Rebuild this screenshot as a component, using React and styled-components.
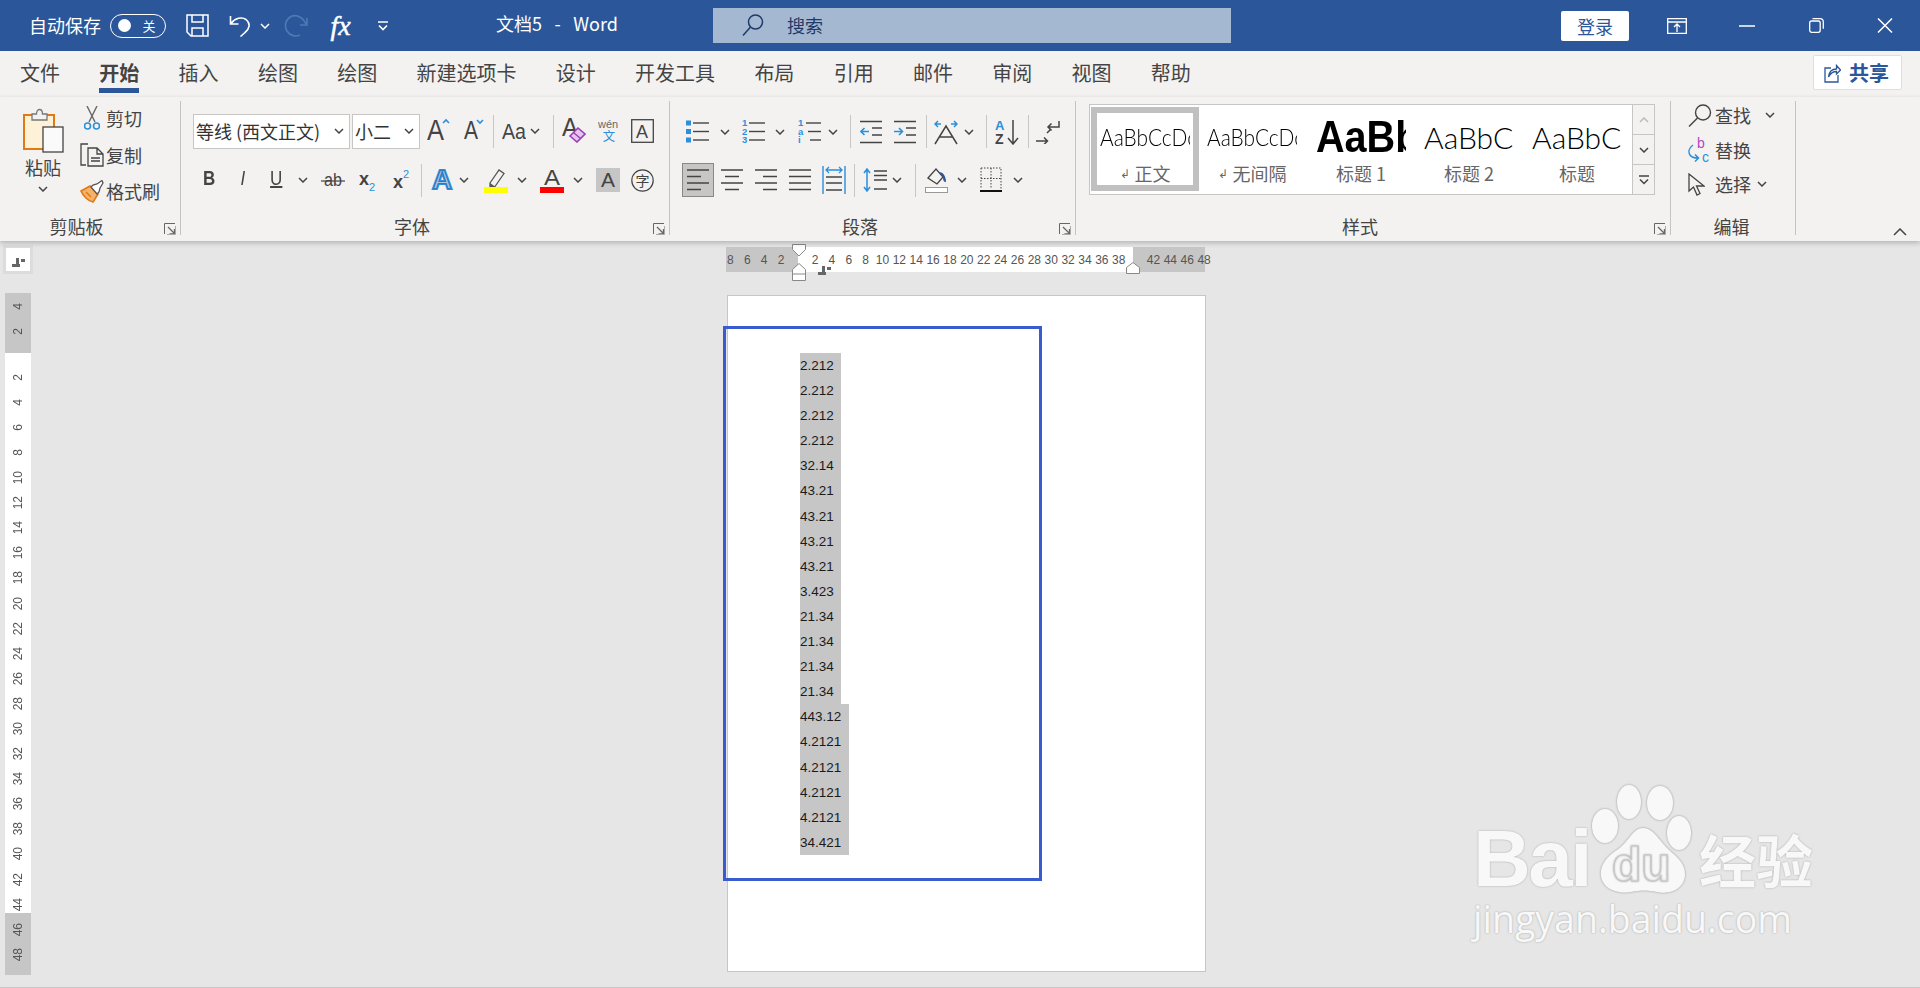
import React from 'react';
import styled, { createGlobalStyle } from 'styled-components';

const UI_FONT = '"Noto Sans CJK SC", "Noto Sans", sans-serif';
const LATIN = '"Liberation Sans", Arial, sans-serif';
const BLUE = '#2b579a';
const INK = '#444';
const SKY = '#2b8fd9';

const GlobalStyle = createGlobalStyle`
    html, body {
        margin: 0;
        height: 100%;
        overflow: hidden;
        background: #e6e6e6;
    }
    body {
        font-family: ${UI_FONT};
        color: ${INK};
    }
`;

const App_ = styled.div`
    position: relative;
    width: 1920px;
    height: 988px;
    overflow: hidden;
    background: #e6e6e6;
    display: flex;
    flex-direction: column;
`;

/* title bar */
const TitleBar = styled.header`
    flex: none;
    height: 51px;
    background: ${BLUE};
    display: flex;
    align-items: center;
    color: #fff;
`;
const TitleItem = styled.div`
    flex: none;
    margin-left: ${(p) => p.$ml || 0}px;
    margin-top: ${(p) => p.$mt || 0}px;
    display: flex;
    align-items: center;
    justify-content: center;
`;
const AutoSave = styled(TitleItem)`
    font-size: 18px;
    line-height: 24px;
    width: 72px;
    margin-top: -2px;
`;
const Toggle = styled(TitleItem)`
    position: relative;
    width: 56px;
    height: 24px;
    box-sizing: border-box;
    border: 1.5px solid #fff;
    border-radius: 12px;
    font-size: 13px;
    padding-left: 22px;
    &::before {
        content: '';
        position: absolute;
        left: 7px;
        top: 4px;
        width: 13px;
        height: 13px;
        border-radius: 50%;
        background: #fff;
    }
`;
const Fx = styled(TitleItem)`
    width: 21px;
    font: italic 400 28px "Liberation Serif", serif;
    line-height: 27px;
    -webkit-text-stroke: 0.5px #fff;
`;
const DocTitle = styled(TitleItem)`
    width: 122px;
    font-size: 18px;
    white-space: pre;
    word-spacing: 2.2px;
    margin-top: -5px;
`;
const SearchBox = styled(TitleItem)`
    width: 518px;
    height: 35px;
    margin-top: -1px;
    justify-content: flex-start;
    background: #a5b8d2;
    color: #1e3a68;
    font-size: 18px;
    padding-left: 29px;
    box-sizing: border-box;
    gap: 23px;
`;
const SignIn = styled(TitleItem)`
    width: 68px;
    height: 30px;
    background: #fff;
    border-radius: 2px;
    color: ${BLUE};
    font-size: 18px;
`;

/* tabs */
const TabRow = styled.nav`
    flex: none;
    height: 46px;
    background: #f3f2f1;
    display: flex;
    align-items: flex-start;
    padding-left: 20px;
    gap: 39.3px;
`;
const Tab = styled.div`
    height: 42px;
    box-sizing: border-box;
    padding-top: 7px;
    font-size: 20px;
    line-height: 30px;
    white-space: nowrap;
    font-weight: ${(p) => (p.$active ? 700 : 400)};
    border-bottom: 5px solid ${(p) => (p.$active ? BLUE : 'transparent')};
`;
const ShareButton = styled.div`
    margin: 4px 18px 0 auto;
    width: 89px;
    height: 35px;
    box-sizing: border-box;
    background: #fff;
    border: 1px solid #e1dfdd;
    border-radius: 2px;
    display: flex;
    align-items: center;
    padding-left: 10px;
    gap: 8px;
    color: ${BLUE};
    font-size: 20px;
    font-weight: 700;
    white-space: nowrap;
`;

/* ribbon */
const Ribbon = styled.section`
    position: relative;
    z-index: 2;
    flex: none;
    height: 144px;
    box-sizing: border-box;
    padding-top: 4px;
    background: #f3f2f1;
    display: flex;
    box-shadow: 0 2px 5px rgba(0, 0, 0, 0.22);
`;
const Group = styled.div`
    position: relative;
    flex: none;
    width: ${(p) => p.$w}px;
    height: 134px;
    box-sizing: border-box;
    border-right: 1px solid #c4c4c4;
    padding-left: ${(p) => p.$pad || 0}px;
`;
const GroupBody = styled.div`
    height: 115px;
    box-sizing: border-box;
    padding-top: ${(p) => p.$top || 0}px;
    display: ${(p) => (p.$flex ? 'flex' : 'block')};
`;
const GroupLabel = styled.div`
    height: 17px;
    line-height: 20px;
    font-size: 18px;
    text-align: center;
    margin-left: ${(p) => -(p.$pad || 0)}px;
    padding-right: ${(p) => p.$shift || 0}px;
    white-space: nowrap;
`;
const Launcher = styled.svg`
    position: absolute;
    right: 4px;
    top: 122px;
`;
const ToolRow = styled.div`
    display: flex;
    align-items: center;
    height: ${(p) => p.$h || 35}px;
    margin-bottom: ${(p) => p.$mb || 0}px;
`;
const Tool = styled.div`
    flex: none;
    display: flex;
    align-items: center;
    justify-content: center;
    width: ${(p) => p.$w}px;
    margin-left: ${(p) => p.$ml || 0}px;
    margin-bottom: ${(p) => (p.$up || 0) * 2}px;
    height: ${(p) => (p.$active ? '34px' : 'auto')};
    ${(p) => p.$active && `
        background: #c8c6c4;
        border: 1px solid #8a8886;
        box-sizing: border-box;
    `}
`;
const ToolSep = styled.div`
    flex: none;
    width: 1px;
    height: 33px;
    margin-left: ${(p) => p.$ml || 0}px;
    background: #c8c6c4;
`;
const Select = styled.div`
    flex: none;
    width: ${(p) => p.$w}px;
    margin-left: ${(p) => p.$ml || 0}px;
    height: 35px;
    box-sizing: border-box;
    background: #fff;
    border: 1px solid #c8c6c4;
    display: flex;
    align-items: center;
    justify-content: space-between;
    padding: 0 5px 2px 2px;
    font-size: 18px;
    white-space: nowrap;
    color: #333;
`;

/* clipboard */
const PasteColumn = styled.div`
    flex: none;
    width: 78px;
    display: flex;
    flex-direction: column;
    align-items: center;
    font-size: 18px;
    padding-left: 8px;
    box-sizing: border-box;
    line-height: 24px;
    gap: 2px;
`;
const PasteGlyph = styled.div`
    height: 52px;
    padding-top: 6px;
    box-sizing: border-box;
`;
const PasteChevron = styled.div`
    display: flex;
    margin-top: 5px;
`;
const ClipColumn = styled.div`
    display: flex;
    flex-direction: column;
    gap: 6.5px;
    padding-top: 2px;
`;
const ClipRow = styled.div`
    height: 30px;
    display: flex;
    align-items: center;
    font-size: 18px;
    white-space: nowrap;
`;
const ClipIcon = styled.div`
    width: 28px;
    display: flex;
    justify-content: center;
`;

/* styles */
const Gallery = styled.div`
    flex: none;
    width: 543px;
    height: 91px;
    box-sizing: border-box;
    background: #fff;
    border: 1px solid #c8c6c4;
    border-right: none;
    padding: 2px 0 0 1px;
    display: flex;
`;
const StyleItem = styled.div`
    flex: none;
    width: ${(p) => p.$w}px;
    height: 84px;
    box-sizing: border-box;
    border: ${(p) => (p.$selected ? '6px solid #c0c0c0' : '6px solid transparent')};
    display: flex;
    flex-direction: column;
    padding-left: ${(p) => p.$pad}px;
`;
const StyleSample = styled.div`
    height: 50px;
    box-sizing: border-box;
    padding-bottom: ${(p) => (p.$bold ? 2 : 3)}px;
    width: 90px;
    overflow: hidden;
    display: flex;
    align-items: center;
    font-family: ${(p) => (p.$bold ? LATIN : '"Lato", "Liberation Sans", sans-serif')};
    font-size: ${(p) => p.$size}px;
    font-weight: ${(p) => (p.$bold ? 700 : 300)};
    color: #000;
    white-space: nowrap;
    span {
        display: inline-block;
        transform-origin: left center;
        transform: scaleX(${(p) => p.$sx || 1});
    }
`;
const StyleName = styled.div`
    width: 90px;
    margin-top: -2px;
    font-size: 18px;
    line-height: 24px;
    color: #666;
    display: flex;
    align-items: center;
    justify-content: center;
    white-space: nowrap;
    gap: 5px;
`;
const ParaMark = styled.span`
    font-size: 12px;
`;
const GalleryScroll = styled.div`
    flex: none;
    width: 23px;
    height: 91px;
    display: flex;
    flex-direction: column;
`;
const ScrollBtn = styled.div`
    flex: 1;
    box-sizing: border-box;
    background: #f3f2f1;
    border: 1px solid #c8c6c4;
    display: flex;
    align-items: center;
    justify-content: center;
    margin-top: ${(p) => (p.$first ? 0 : -1)}px;
`;

/* editing */
const EditColumn = styled.div`
    margin-top: -2px;
    display: flex;
    flex-direction: column;
    gap: 2.5px;
`;
const EditRow = styled.div`
    height: 32px;
    display: flex;
    align-items: center;
    font-size: 18px;
    white-space: nowrap;
`;
const EditIcon = styled.div`
    width: 27px;
    flex: none;
    display: flex;
    justify-content: flex-start;
`;
const EditChevron = styled.div`
    display: flex;
    margin-left: ${(p) => p.$ml}px;
`;
const CollapseRibbon = styled.svg`
    position: absolute;
    right: 13px;
    top: 131px;
`;

/* workspace */
const Workspace = styled.main`
    position: relative;
    flex: 1;
    display: flex;
    min-height: 0;
    border-bottom: 1px solid #c6c6c6;
`;
const LeftColumn = styled.div`
    flex: none;
    width: 34px;
    padding-top: 4px;
    box-sizing: border-box;
`;
const RulerCorner = styled.div`
    width: 30px;
    height: 29px;
    margin-left: 3px;
    padding-top: 6px;
    box-sizing: border-box;
    background: #fff;
    border: 3px solid #dcdcdc;
    display: flex;
    align-items: center;
    justify-content: center;
`;
const VRuler = styled.div`
    width: 26px;
    margin: 19.4px 0 0 5px;
    display: flex;
    flex-direction: column;
    font-family: ${LATIN};
    font-size: 12px;
    color: #555;
`;
const VSegment = styled.div`
    height: ${(p) => p.$h}px;
    box-sizing: border-box;
    background: ${(p) => (p.$on ? '#fff' : '#c6c6c6')};
    padding-top: ${(p) => p.$pt || 0}px;
    overflow: hidden;
`;
const VTick = styled.div`
    height: 25.1px;
    display: flex;
    align-items: center;
    justify-content: center;
    span {
        writing-mode: vertical-rl;
        transform: rotate(180deg);
    }
`;
const MainColumn = styled.div`
    flex: 1;
    padding: 6px 0 0 692px;
`;
const HRuler = styled.div`
    position: relative;
    width: 479px;
    height: 25px;
    display: flex;
    font-family: ${LATIN};
    font-size: 12px;
    color: #555;
`;
const HSegment = styled.div`
    flex: none;
    width: ${(p) => p.$w}px;
    box-sizing: border-box;
    background: ${(p) => (p.$on ? '#fff' : '#c6c6c6')};
    padding-left: ${(p) => p.$pl || 0}px;
    padding-right: ${(p) => p.$pr || 0}px;
    display: flex;
    justify-content: ${(p) => (p.$end ? 'flex-end' : 'flex-start')};
    align-items: center;
`;
const HTick = styled.div`
    flex: none;
    width: 16.89px;
    text-align: center;
    white-space: nowrap;
    display: flex;
    justify-content: center;
`;
const RulerMark = styled.svg`
    position: absolute;
    left: ${(p) => p.$x}px;
    top: ${(p) => p.$y}px;
`;
const Page = styled.div`
    position: relative;
    width: 479px;
    height: 677px;
    margin: 23px 0 0 1px;
    box-sizing: border-box;
    background: #fff;
    border: 1px solid #c6c6c6;
    padding: 57px 0 0 72px;
`;
const DataLine = styled.div`
    width: ${(p) => p.$w}px;
    height: 25.1px;
    background: #c6c6c6;
    font-family: ${LATIN};
    font-size: 13.5px;
    line-height: 26px;
    color: #1a1a1a;
`;
const Highlight = styled.div`
    position: absolute;
    left: -5px;
    top: 30px;
    width: 319px;
    height: 555px;
    box-sizing: border-box;
    border: 3px solid #3a5bd0;
`;

/* watermark */
const Watermark = styled.div`
    position: absolute;
    left: 1473px;
    top: 784px;
    width: 350px;
    color: #f8f8f8;
    text-shadow: 0 0 2px rgba(0, 0, 0, 0.3);
`;
const WatermarkLogo = styled.div`
    display: flex;
    align-items: flex-end;
    height: 110px;
`;
const WatermarkBai = styled.div`
    width: 118px;
    box-sizing: border-box;
    font: 700 80px/70px ${LATIN};
    letter-spacing: -2.5px;
`;
const WatermarkPaw = styled.svg`
    flex: none;
    filter: drop-shadow(0 0 1px rgba(0, 0, 0, 0.35));
`;
const WatermarkWords = styled.div`
    margin-left: 5px;
    font: 700 57px/72px ${UI_FONT};
    white-space: nowrap;
`;
const WatermarkUrl = styled.div`
    font: 400 37.5px/48px "Open Sans", sans-serif;
    white-space: nowrap;
    margin-top: 1px;
`;

const Chev = ({ c = INK, w = 10 }) => (
    <svg width={w} height="6" viewBox="0 0 10 6">
        <path d="M1 1l4 4 4-4" fill="none" stroke={c} strokeWidth="1.5" />
    </svg>
);
const LauncherIcon = () => (
    <Launcher width="12" height="12" viewBox="0 0 12 12" fill="none" stroke="#666">
        <path d="M.5 11V.5H11" />
        <path d="M4 4l6 6M10.500 6v5h-5" strokeWidth="1.3" />
        <path d="M11.500 3v8.500H3" stroke="#aaa" />
    </Launcher>
);

const T = ({ x, y, s, f = INK, fw, fs, tl, ff = LATIN, children }) => (
    <text
        x={x}
        y={y}
        fontSize={s}
        fill={f}
        fontWeight={fw}
        fontStyle={fs}
        fontFamily={ff}
        textLength={tl}
        lengthAdjust={tl ? 'spacingAndGlyphs' : undefined}
    >
        {children}
    </text>
);

/* title icons */
const SaveIcon = () => (
    <svg width="23" height="23" viewBox="0 0 23 23" fill="none" stroke="#fff" strokeWidth="1.5">
        <path d="M1 1h21v21H5l-4-4zM6 1v7h11V1M6 22v-8h11v8" />
    </svg>
);
const UndoIcon = () => (
    <svg width="22" height="23" viewBox="0 0 22 23" fill="none" stroke="#fff" strokeWidth="1.6">
        <path d="M1.500 2v8h8M2 9.500C6 4 13 2.500 17 5.500c5 4 3.500 9.500-1 13L11.500 22.500" />
    </svg>
);
const RedoIcon = () => (
    <svg width="25" height="25" viewBox="0 0 25 25" fill="none" stroke="#4f79b4" strokeWidth="1.6">
        <path d="M23 5v7h-7M22 11C19 4 12 1 7 3.500 1.500 6.500 0 13 3 18c3 5 9 6 13 4" />
    </svg>
);
const MoreIcon = () => (
    <svg width="10" height="10" viewBox="0 0 10 10" fill="none" stroke="#fff" strokeWidth="1.6">
        <path d="M0 1h10M1 4.500l4 4 4-4" />
    </svg>
);
const SearchIcon = () => (
    <svg width="22" height="22" viewBox="0 0 22 22" fill="none" stroke="#1e3a68" strokeWidth="1.5">
        <circle cx="13.500" cy="8" r="7" />
        <path d="M8.500 13L1 21.500" />
    </svg>
);
const DisplayIcon = () => (
    <svg width="20" height="16" viewBox="0 0 20 16" fill="none" stroke="#fff" strokeWidth="1.3">
        <path d="M.7.7h18.600v14.600H.7zM.7 4h18.600M10 14V6.500M7 9l3-3 3 3" />
    </svg>
);
const MinIcon = () => (
    <svg width="16" height="2" viewBox="0 0 16 2">
        <path d="M0 1h16" stroke="#fff" strokeWidth="1.5" />
    </svg>
);
const RestoreIcon = () => (
    <svg width="15" height="15" viewBox="0 0 15 15" fill="none" stroke="#fff" strokeWidth="1.3">
        <rect x=".7" y="3" width="10.500" height="11.300" rx="2" />
        <path d="M3.500.7h7.800a3 3 0 0 1 3 3v7" />
    </svg>
);
const CloseIcon = () => (
    <svg width="16" height="15" viewBox="0 0 16 15" fill="none" stroke="#fff" strokeWidth="1.5">
        <path d="M1 .5l14 14M15 .5l-14 14" />
    </svg>
);
const ShareIcon = () => (
    <svg width="17" height="21" viewBox="0 0 17 21" fill="none" stroke={BLUE} strokeWidth="1.3">
        <path d="M7 6H1v14h13v-7" />
        <path d="M4.500 15c.5-5 3.500-8 8-8V3.500l4 4.500-4 4V9.500c-3 0-6 1.500-8 5.500z" />
    </svg>
);

/* clipboard icons */
const PasteIcon = () => (
    <svg width="41" height="46" viewBox="0 0 41 46">
        <rect x="1" y="8" width="30" height="34" fill="#fdf1d8" stroke="#e07a14" strokeWidth="2" />
        <path d="M9 7h4.500c0-6 6-6 6 0H24v6H9z" fill="#f3f2f1" stroke="#777" strokeWidth="1.3" />
        <rect x="20" y="20" width="20" height="25" fill="#fafafa" stroke="#444" strokeWidth="1.3" />
    </svg>
);
const CutIcon = () => (
    <svg width="16" height="25" viewBox="0 0 16 25" fill="none">
        <path d="M3 0l8 16M13 0L5 16" stroke="#666" strokeWidth="1.4" />
        <circle cx="3.500" cy="20" r="3" stroke={SKY} strokeWidth="1.6" />
        <circle cx="12.500" cy="20" r="3" stroke={SKY} strokeWidth="1.6" />
    </svg>
);
const CopyIcon = () => (
    <svg width="24" height="24" viewBox="0 0 24 24" fill="none" stroke="#444" strokeWidth="1.3">
        <path d="M8 1H1v21h5" />
        <path d="M8 5v18h15V11l-6-6zM17 5v6h6M11 15h9M11 18h9" />
    </svg>
);
const BrushIcon = () => (
    <svg width="24" height="23" viewBox="0 0 24 23" fill="none">
        <path d="M1 11l9-5 8 8-5 8C8 21 3 16 1 11z" fill="#f6b26b" stroke="#e07a14" strokeWidth="1.6" />
        <path d="M6 12l5 5" stroke="#e07a14" strokeWidth="1.4" />
        <path d="M11 7l2-2 4-1 5-3.500L23 3l-3 5-1 4-2 2z" fill="#fff" stroke="#555" strokeWidth="1.3" />
    </svg>
);

/* font icons */
const GrowIcon = () => (
    <svg width="23" height="24" viewBox="0 0 23 24">
        <T x="0" y="23" s="30" tl="17">A</T>
        <path d="M16 6l3-3 3 3" fill="none" stroke={SKY} strokeWidth="1.6" />
    </svg>
);
const ShrinkIcon = () => (
    <svg width="20" height="22" viewBox="0 0 20 22">
        <T x="0" y="21" s="26" tl="14">A</T>
        <path d="M13 2l3 3 3-3" fill="none" stroke={SKY} strokeWidth="1.6" />
    </svg>
);
const CaseIcon = () => (
    <svg width="24" height="20" viewBox="0 0 24 20">
        <T x="0" y="18" s="22" tl="24">Aa</T>
    </svg>
);
const ClearIcon = () => (
    <svg width="24" height="26" viewBox="0 0 24 26">
        <T x="0" y="19" s="26" tl="16">A</T>
        <path d="M8 19l8-8 7 6-8 8z" fill="#e6c6ee" stroke="#9b3fb5" strokeWidth="1.6" />
        <path d="M11.500 15.500l7 6" stroke="#9b3fb5" strokeWidth="1.4" />
    </svg>
);
const PinyinIcon = () => (
    <svg width="22" height="26" viewBox="0 0 22 26">
        <T x="0" y="10" s="11.500" f="#666">wén</T>
        <T x="5" y="24" s="13" f={SKY} ff={UI_FONT}>文</T>
    </svg>
);
const BoxAIcon = () => (
    <svg width="23" height="24" viewBox="0 0 23 24">
        <rect x=".7" y=".7" width="21.600" height="22.600" fill="none" stroke="#444" strokeWidth="1.3" />
        <T x="5" y="19" s="18">A</T>
    </svg>
);
const TextGlyph = styled.span`
    display: inline-block;
    font-family: ${LATIN};
    font-size: ${(p) => p.$s}px;
    font-weight: ${(p) => (p.$b ? 700 : 400)};
    font-style: ${(p) => (p.$i ? 'italic' : 'normal')};
    text-decoration: ${(p) => p.$deco || 'none'};
    line-height: 1;
    color: #444;
    margin-bottom: 4px;
    transform: scaleX(0.85);
`;
const StrikeIcon = () => (
    <svg width="24" height="18" viewBox="0 0 24 18">
        <T x="3" y="15" s="18" tl="18">ab</T>
        <path d="M0 10h24" stroke="#444" strokeWidth="1.2" />
    </svg>
);
const SubIcon = () => (
    <svg width="20" height="24" viewBox="0 0 20 24">
        <T x="1" y="17" s="18" fw="700">x</T>
        <T x="11" y="23" s="11" f={SKY}>2</T>
    </svg>
);
const SupIcon = () => (
    <svg width="20" height="24" viewBox="0 0 20 24">
        <T x="1" y="20" s="18" fw="700">x</T>
        <T x="11" y="10" s="11" f={SKY}>2</T>
    </svg>
);
const EffectIcon = () => (
    <svg width="24" height="24" viewBox="0 0 24 24">
        <text x="12" y="22" textAnchor="middle" fontFamily={LATIN} fontWeight="700" fontSize="28" fill="#fff" stroke={SKY} strokeWidth="2">
            A
        </text>
        <text x="12" y="22" textAnchor="middle" fontFamily={LATIN} fontWeight="700" fontSize="28" fill={BLUE} opacity=".35">
            A
        </text>
    </svg>
);
const HighlightIcon = () => (
    <svg width="24" height="25" viewBox="0 0 24 25">
        <path d="M6 15l9-13 5 3.500-9 13-5 1z" fill="#f3f2f1" stroke="#555" strokeWidth="1.3" />
        <path d="M6 15l5 3.500-5 1z" fill="#555" />
        <rect y="19" width="24" height="6" fill="#ffff00" />
    </svg>
);
const FontColorIcon = () => (
    <svg width="24" height="25" viewBox="0 0 24 25">
        <T x="4" y="17" s="22" tl="16">A</T>
        <rect y="19" width="24" height="6" fill="#f00" />
    </svg>
);
const ShadeIcon = () => (
    <svg width="24" height="24" viewBox="0 0 24 24">
        <rect width="24" height="24" fill="#c6c6c6" />
        <T x="5" y="19" s="20" tl="14">A</T>
    </svg>
);
const CharIcon = () => (
    <svg width="23" height="23" viewBox="0 0 23 23">
        <circle cx="11.500" cy="11.500" r="10.700" fill="none" stroke="#444" strokeWidth="1.2" />
        <T x="4.500" y="17" s="14" ff={UI_FONT}>字</T>
    </svg>
);

/* paragraph icons */
const BulletIcon = ({ kind }) => {
    const marks = kind === 'bullet' ? null : kind === 'num' ? ['1', '2', '3'] : ['1', 'a', 'i'];
    return (
        <svg width="23" height="25" viewBox="0 0 23 25">
            {[4, 12.500, 21].map((y, i) => (
                <g key={y}>
                    {marks ? (
                        <T x="0" y={y + 3} s="9.500" f={SKY} fw="700">{marks[i]}</T>
                    ) : (
                        <rect x="0" y={y - 2.500} width="5" height="5" fill={SKY} />
                    )}
                    <path d={`M${kind === 'multi' ? 8 + i * 2 : 7} ${y}H23`} stroke="#444" strokeWidth="1.4" />
                </g>
            ))}
        </svg>
    );
};
const IndentIcon = ({ right }) => (
    <svg width="22" height="24" viewBox="0 0 22 24" fill="none">
        <path d="M0 1.500h22M12 8h10M12 15h10M0 22.500h22" stroke="#444" strokeWidth="1.4" />
        {right ? (
            <path d="M0 11.500h8M5 8l3.500 3.500L5 15" stroke={SKY} strokeWidth="1.6" />
        ) : (
            <path d="M9 11.500H1M4.500 8L1 11.500 4.500 15" stroke={SKY} strokeWidth="1.6" />
        )}
    </svg>
);
const DirectionIcon = () => (
    <svg width="24" height="26" viewBox="0 0 24 26" fill="none">
        <path d="M1 25L12 7l11 18M5.500 18h13" stroke="#444" strokeWidth="1.5" />
        <path d="M7 5H1M4 2L1 5l3 3M17 5h6M20 2l3 3-3 3" stroke={SKY} strokeWidth="1.5" />
    </svg>
);
const SortIcon = () => (
    <svg width="25" height="26" viewBox="0 0 25 26" fill="none">
        <T x="0" y="11" s="13" f={SKY} fw="700">A</T>
        <T x="0" y="25" s="14" fw="700">Z</T>
        <path d="M18 1v24M13 19l5 6 5-6" stroke="#444" strokeWidth="1.5" />
    </svg>
);
const LtrIcon = () => (
    <svg width="24" height="24" viewBox="0 0 24 24" fill="none" stroke="#444" strokeWidth="1.5">
        <path d="M23 1v6H12M15.500 3.500L12 7l3.500 3.500" />
        <path d="M0 21h11M8 17.500l3.500 3.500L8 24.500M11 13l4-4" />
    </svg>
);
const AlignIcon = ({ widths, align }) => (
    <svg width="22" height="22" viewBox="0 0 22 22">
        {[1, 7.500, 14, 20.500].map((y, i) => {
            const w = widths[i];
            const x = align === 'center' ? (22 - w) / 2 : align === 'right' ? 22 - w : 0;
            return <rect key={y} x={x} y={y - 0.75} width={w} height="1.500" fill="#444" />;
        })}
    </svg>
);
const DistributeIcon = () => (
    <svg width="24" height="30" viewBox="0 0 24 30" fill="none">
        <path d="M1 1v28M23 1v28" stroke={SKY} strokeWidth="1.400" />
        <path d="M4 5h16M7 2L4 5l3 3M17 2l3 3-3 3" stroke={SKY} strokeWidth="1.300" />
        <path d="M4 12h16M4 18h16M4 25h16" stroke="#444" strokeWidth="1.500" />
    </svg>
);
const LineSpacingIcon = () => (
    <svg width="24" height="24" viewBox="0 0 24 24" fill="none">
        <path d="M4 1v22M1 5l3-4 3 4M1 19l3 4 3-4" stroke={SKY} strokeWidth="1.500" />
        <path d="M11 3h13M11 12h13M11 21h13M11 7.500h13" stroke="#444" strokeWidth="1.500" />
    </svg>
);
const FillIcon = () => (
    <svg width="23" height="26" viewBox="0 0 23 26" fill="none">
        <path d="M3 11l8-9 7 8-6 7z" stroke="#444" strokeWidth="1.300" />
        <path d="M14 5c4 0 7 4 7 10-2 0-3-1-3-5" fill={BLUE} />
        <rect x=".5" y="20.500" width="22" height="5" fill="#fff" stroke="#999" />
    </svg>
);
const BorderIcon = () => (
    <svg width="22" height="26" viewBox="0 0 22 26" fill="none">
        <path d="M1 1h20v21M1 1v21M1 11.500h20M11 1v21" stroke="#444" strokeWidth="1" strokeDasharray="1.500 1.500" />
        <path d="M0 24h22" stroke="#111" strokeWidth="2" />
    </svg>
);

/* editing icons */
const FindIcon = () => (
    <svg width="24" height="23" viewBox="0 0 24 23" fill="none" stroke="#444" strokeWidth="1.400">
        <circle cx="15" cy="8.500" r="7.500" />
        <path d="M9.500 14L1 22.500" />
    </svg>
);
const ReplaceIcon = () => (
    <svg width="23" height="26" viewBox="0 0 23 26" fill="none">
        <T x="9" y="11" s="14" f="#b146c2">b</T>
        <T x="14" y="25" s="14" f={SKY}>c</T>
        <path d="M5 8C1 11 0 15 2 18s5 3 8 3M7 17.500l3.500 3.500L7 24.500" stroke={SKY} strokeWidth="1.500" />
    </svg>
);
const SelectIcon = () => (
    <svg width="17" height="23" viewBox="0 0 17 23" fill="none" stroke="#444" strokeWidth="1.300">
        <path d="M1 1v17l4.500-4 3.500 8 3-1.500-3.500-7.500H16z" />
    </svg>
);

const LEFT_TICKS = [8, 6, 4, 2];
const ACTIVE_TICKS = Array.from({ length: 19 }, (_, i) => (i + 1) * 2);
const RIGHT_TICKS = [42, 44, 46, 48];
const V_TICKS = Array.from({ length: 22 }, (_, i) => (i + 1) * 2);
const TABS = ['文件', '开始', '插入', '绘图', '绘图', '新建选项卡', '设计', '开发工具', '布局', '引用', '邮件', '审阅', '视图', '帮助'];
const SHORT_LINES = ['2.212', '2.212', '2.212', '2.212', '32.14', '43.21', '43.21', '43.21', '43.21', '3.423', '21.34', '21.34', '21.34', '21.34'];
const LONG_LINES = ['443.12', '4.2121', '4.2121', '4.2121', '4.2121', '34.421'];

function App() {
    return (
        <App_>
            <GlobalStyle />
            <TitleBar>
                <AutoSave $ml={29}>自动保存</AutoSave>
                <Toggle $ml={9}>关</Toggle>
                <TitleItem $ml={20}><SaveIcon /></TitleItem>
                <TitleItem $ml={20}><UndoIcon /></TitleItem>
                <TitleItem $ml={9}><Chev c="#fff" /></TitleItem>
                <TitleItem $ml={14}><RedoIcon /></TitleItem>
                <Fx $ml={21}>fx</Fx>
                <TitleItem $ml={27}><MoreIcon /></TitleItem>
                <DocTitle $ml={108}>{'文档5  -  Word'}</DocTitle>
                <SearchBox $ml={95}>
                    <SearchIcon />
                    <span>搜索</span>
                </SearchBox>
                <SignIn $ml={330}>登录</SignIn>
                <TitleItem $ml={38}><DisplayIcon /></TitleItem>
                <TitleItem $ml={52}><MinIcon /></TitleItem>
                <TitleItem $ml={54}><RestoreIcon /></TitleItem>
                <TitleItem $ml={53}><CloseIcon /></TitleItem>
            </TitleBar>

            <TabRow>
                {TABS.map((t, i) => (
                    <Tab key={i} $active={t === '开始'}>{t}</Tab>
                ))}
                <ShareButton>
                    <ShareIcon />
                    共享
                </ShareButton>
            </TabRow>

            <Ribbon>
                <Group $w={181}>
                    <GroupBody $flex>
                        <PasteColumn>
                            <PasteGlyph><PasteIcon /></PasteGlyph>
                            <div>粘贴</div>
                            <PasteChevron><Chev /></PasteChevron>
                        </PasteColumn>
                        <ClipColumn>
                            <ClipRow><ClipIcon><CutIcon /></ClipIcon>剪切</ClipRow>
                            <ClipRow><ClipIcon><CopyIcon /></ClipIcon>复制</ClipRow>
                            <ClipRow><ClipIcon><BrushIcon /></ClipIcon>格式刷</ClipRow>
                        </ClipColumn>
                    </GroupBody>
                    <GroupLabel $shift={27}>剪贴板</GroupLabel>
                    <LauncherIcon />
                </Group>

                <Group $w={489} $pad={12}>
                    <GroupBody $top={13}>
                        <ToolRow $mb={14}>
                            <Select $w={157}>等线 (西文正文)<Chev /></Select>
                            <Select $w={68} $ml={2}>小二<Chev /></Select>
                            <Tool $w={23} $ml={7} $up={3}><GrowIcon /></Tool>
                            <Tool $w={20} $ml={14} $up={3}><ShrinkIcon /></Tool>
                            <ToolSep $ml={9} />
                            <Tool $w={24} $ml={8} $up={1}><CaseIcon /></Tool>
                            <Tool $w={10} $ml={4} $up={1}><Chev /></Tool>
                            <ToolSep $ml={13} />
                            <Tool $w={24} $ml={8} $up={2}><ClearIcon /></Tool>
                            <Tool $w={21} $ml={12} $up={1}><PinyinIcon /></Tool>
                            <Tool $w={23} $ml={12} $up={1}><BoxAIcon /></Tool>
                        </ToolRow>
                        <ToolRow $h={34}>
                            <Tool $w={16} $ml={8}><TextGlyph $s={20} $b>B</TextGlyph></Tool>
                            <Tool $w={16} $ml={18}><TextGlyph $s={20} $i>I</TextGlyph></Tool>
                            <Tool $w={16} $ml={17}><TextGlyph $s={20} $deco="underline">U</TextGlyph></Tool>
                            <Tool $w={10} $ml={14}><Chev /></Tool>
                            <Tool $w={24} $ml={13}><StrikeIcon /></Tool>
                            <Tool $w={20} $ml={13}><SubIcon /></Tool>
                            <Tool $w={20} $ml={14}><SupIcon /></Tool>
                            <ToolSep $ml={9} />
                            <Tool $w={24} $ml={8} $up={1}><EffectIcon /></Tool>
                            <Tool $w={10} $ml={5}><Chev /></Tool>
                            <Tool $w={24} $ml={15}><HighlightIcon /></Tool>
                            <Tool $w={10} $ml={9}><Chev /></Tool>
                            <Tool $w={24} $ml={13}><FontColorIcon /></Tool>
                            <Tool $w={10} $ml={9}><Chev /></Tool>
                            <Tool $w={24} $ml={13}><ShadeIcon /></Tool>
                            <Tool $w={23} $ml={11}><CharIcon /></Tool>
                        </ToolRow>
                    </GroupBody>
                    <GroupLabel $pad={12} $shift={26}>字体</GroupLabel>
                    <LauncherIcon />
                </Group>

                <Group $w={406} $pad={12}>
                    <GroupBody $top={13}>
                        <ToolRow $mb={14}>
                            <Tool $w={23} $ml={4}><BulletIcon kind="bullet" /></Tool>
                            <Tool $w={10} $ml={11}><Chev /></Tool>
                            <Tool $w={23} $ml={12}><BulletIcon kind="num" /></Tool>
                            <Tool $w={10} $ml={10}><Chev /></Tool>
                            <Tool $w={23} $ml={13}><BulletIcon kind="multi" /></Tool>
                            <Tool $w={10} $ml={7}><Chev /></Tool>
                            <ToolSep $ml={12} />
                            <Tool $w={22} $ml={9}><IndentIcon /></Tool>
                            <Tool $w={22} $ml={12}><IndentIcon right /></Tool>
                            <ToolSep $ml={10} />
                            <Tool $w={24} $ml={7}><DirectionIcon /></Tool>
                            <Tool $w={10} $ml={6}><Chev /></Tool>
                            <ToolSep $ml={12} />
                            <Tool $w={25} $ml={8}><SortIcon /></Tool>
                            <ToolSep $ml={8} />
                            <Tool $w={24} $ml={7}><LtrIcon /></Tool>
                        </ToolRow>
                        <ToolRow $h={34}>
                            <Tool $w={32} $active><AlignIcon widths={[22, 14, 22, 14]} /></Tool>
                            <Tool $w={22} $ml={7}><AlignIcon widths={[22, 14, 22, 14]} align="center" /></Tool>
                            <Tool $w={22} $ml={12}><AlignIcon widths={[22, 14, 22, 14]} align="right" /></Tool>
                            <Tool $w={22} $ml={12}><AlignIcon widths={[22, 22, 22, 22]} /></Tool>
                            <Tool $w={24} $ml={11}><DistributeIcon /></Tool>
                            <ToolSep $ml={8} />
                            <Tool $w={24} $ml={8}><LineSpacingIcon /></Tool>
                            <Tool $w={10} $ml={5}><Chev /></Tool>
                            <ToolSep $ml={13} />
                            <Tool $w={23} $ml={9}><FillIcon /></Tool>
                            <Tool $w={10} $ml={9}><Chev /></Tool>
                            <Tool $w={22} $ml={13}><BorderIcon /></Tool>
                            <Tool $w={10} $ml={11}><Chev /></Tool>
                        </ToolRow>
                    </GroupBody>
                    <GroupLabel $pad={12} $shift={25}>段落</GroupLabel>
                    <LauncherIcon />
                </Group>

                <Group $w={595} $pad={13}>
                    <GroupBody $top={3} $flex>
                        <Gallery>
                            <StyleItem $w={108} $pad={3} $selected>
                                <StyleSample $size={24} $sx={0.87}><span>AaBbCcDc</span></StyleSample>
                                <StyleName><ParaMark>↲</ParaMark>正文</StyleName>
                            </StyleItem>
                            <StyleItem $w={109} $pad={2}>
                                <StyleSample $size={24} $sx={0.87}><span>AaBbCcDc</span></StyleSample>
                                <StyleName><ParaMark>↲</ParaMark>无间隔</StyleName>
                            </StyleItem>
                            <StyleItem $w={108} $pad={2}>
                                <StyleSample $size={44} $bold $sx={0.9}><span>AaBbCc</span></StyleSample>
                                <StyleName>标题 1</StyleName>
                            </StyleItem>
                            <StyleItem $w={108} $pad={2}>
                                <StyleSample $size={30}><span>AaBbCc</span></StyleSample>
                                <StyleName>标题 2</StyleName>
                            </StyleItem>
                            <StyleItem $w={108} $pad={2}>
                                <StyleSample $size={30}><span>AaBbCc</span></StyleSample>
                                <StyleName>标题</StyleName>
                            </StyleItem>
                        </Gallery>
                        <GalleryScroll>
                            <ScrollBtn $first>
                                <svg width="10" height="6" viewBox="0 0 10 6"><path d="M1 5l4-4 4 4" fill="none" stroke="#bbb" strokeWidth="1.500" /></svg>
                            </ScrollBtn>
                            <ScrollBtn><Chev /></ScrollBtn>
                            <ScrollBtn>
                                <svg width="10" height="10" viewBox="0 0 10 10" fill="none" stroke="#444" strokeWidth="1.500"><path d="M0 1h10M1 4.500l4 4 4-4" /></svg>
                            </ScrollBtn>
                        </GalleryScroll>
                    </GroupBody>
                    <GroupLabel $pad={13} $shift={26}>样式</GroupLabel>
                    <LauncherIcon />
                </Group>

                <Group $w={125} $pad={17}>
                    <GroupBody $flex>
                        <EditColumn>
                            <EditRow>
                                <EditIcon><FindIcon /></EditIcon>查找
                                <EditChevron $ml={14}><Chev /></EditChevron>
                            </EditRow>
                            <EditRow>
                                <EditIcon><ReplaceIcon /></EditIcon>替换
                            </EditRow>
                            <EditRow>
                                <EditIcon><SelectIcon /></EditIcon>选择
                                <EditChevron $ml={6}><Chev /></EditChevron>
                            </EditRow>
                        </EditColumn>
                    </GroupBody>
                    <GroupLabel $pad={17} $shift={3}>编辑</GroupLabel>
                </Group>
                <CollapseRibbon width="14" height="8" viewBox="0 0 14 8">
                    <path d="M1 7l6-6 6 6" fill="none" stroke="#444" strokeWidth="1.500" />
                </CollapseRibbon>
            </Ribbon>

            <Workspace>
                <LeftColumn>
                    <RulerCorner>
                        <svg width="13" height="9" viewBox="0 0 13 9" fill="#666">
                            <path d="M0 6h4V0h3v6h1v3H0zM9 1h4v3H9z" />
                        </svg>
                    </RulerCorner>
                    <VRuler>
                        <VSegment $h={60.100}>
                            <VTick><span>4</span></VTick>
                            <VTick><span>2</span></VTick>
                        </VSegment>
                        <VSegment $h={559.200} $on $pt={11.350}>
                            {V_TICKS.map((n) => <VTick key={n}><span>{n}</span></VTick>)}
                        </VSegment>
                        <VSegment $h={62.300} $pt={4.150}>
                            <VTick><span>46</span></VTick>
                            <VTick><span>48</span></VTick>
                        </VSegment>
                    </VRuler>
                </LeftColumn>
                <MainColumn>
                    <HRuler>
                        <HSegment $w={72} $end $pr={8.500}>
                            {LEFT_TICKS.map((n) => <HTick key={n}>{n}</HTick>)}
                        </HSegment>
                        <HSegment $w={335} $on $pl={8.550}>
                            {ACTIVE_TICKS.map((n) => <HTick key={n}>{n}</HTick>)}
                        </HSegment>
                        <HSegment $w={72} $pl={12}>
                            {RIGHT_TICKS.map((n) => <HTick key={n}>{n}</HTick>)}
                        </HSegment>
                        <RulerMark $x={66} $y={-3} width="14" height="13" viewBox="0 0 14 13">
                            <path d="M.5.5h13v5L7 12 .5 5.500z" fill="#fff" stroke="#888" />
                        </RulerMark>
                        <RulerMark $x={66} $y={16} width="14" height="18" viewBox="0 0 14 18">
                            <path d="M.5 17.500V6.500L7 .5l6.500 6v11zM.5 11h13" fill="#fff" stroke="#888" />
                        </RulerMark>
                        <RulerMark $x={92} $y={19} width="13" height="9" viewBox="0 0 13 9" fill="#666">
                            <path d="M0 6h4V0h3v6h1v3H0zM9 1h4v3H9z" />
                        </RulerMark>
                        <RulerMark $x={400} $y={15} width="14" height="12" viewBox="0 0 14 12">
                            <path d="M.5 11.500V5.500L7 .5l6.500 5v6z" fill="#fff" stroke="#888" />
                        </RulerMark>
                    </HRuler>
                    <Page>
                        {SHORT_LINES.map((v, i) => <DataLine key={i} $w={41}>{v}</DataLine>)}
                        {LONG_LINES.map((v, i) => <DataLine key={i} $w={49}>{v}</DataLine>)}
                        <Highlight />
                    </Page>
                </MainColumn>
            </Workspace>

            <Watermark>
                <WatermarkLogo>
                    <WatermarkBai>Bai</WatermarkBai>
                    <WatermarkPaw width="103" height="110" viewBox="0 0 103 110" fill="#f8f8f8">
                        <ellipse cx="14" cy="42" rx="13" ry="17" />
                        <ellipse cx="38" cy="18" rx="12" ry="17" />
                        <ellipse cx="69" cy="19" rx="13" ry="17" />
                        <ellipse cx="88" cy="49" rx="12" ry="17" />
                        <path d="M52 44C42 44 38 58 26 66 14 74 9 82 10 92c2 14 18 18 30 16 10-2 16-2 26 0 14 3 28-4 28-18 0-12-10-18-18-26C68 56 62 44 52 44z" />
                        <text x="21" y="97" fontFamily={LATIN} fontWeight="700" fontSize="48" fill="#f8f8f8" stroke="#c8c8c8" strokeWidth="1.200">du</text>
                    </WatermarkPaw>
                    <WatermarkWords>经验</WatermarkWords>
                </WatermarkLogo>
                <WatermarkUrl>jingyan.baidu.com</WatermarkUrl>
            </Watermark>
        </App_>
    );
}

export default App;
